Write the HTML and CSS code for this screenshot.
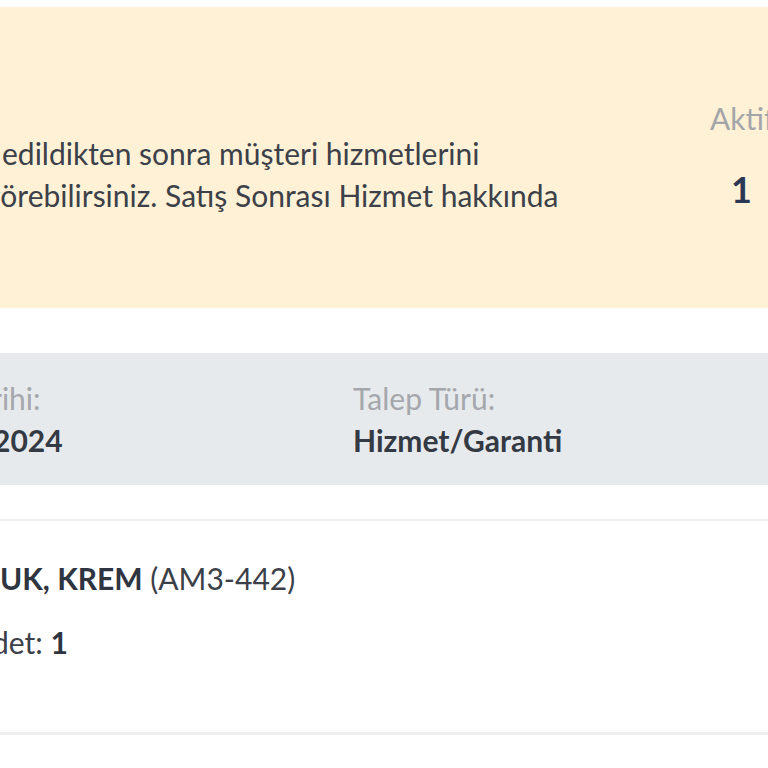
FILE: index.html
```html
<!DOCTYPE html>
<html lang="tr">
<head>
<meta charset="utf-8">
<link rel="stylesheet" href="styles.css">
</head>
<body>
<div class="page">
  <section class="banner">
    <div class="banner-text">
      <div class="line line-1">edildikten sonra müşteri hizmetlerini</div>
      <div class="line line-2">görebilirsiniz. Satış Sonrası Hizmet hakkında</div>
    </div>
    <div class="stat">
      <div class="stat-label">Aktif</div>
      <div class="stat-value">1</div>
    </div>
  </section>

  <section class="info">
    <div class="info-col">
      <div class="info-label info-label-first">rihi:</div>
      <div class="info-value info-value-first">2024</div>
    </div>
    <div class="info-col">
      <div class="info-label">Talep Türü:</div>
      <div class="info-value">Hizmet/Garanti</div>
    </div>
  </section>

  <section class="item">
    <div class="item-name"><strong>UK, KREM</strong> (AM3-442)</div>
    <div class="item-qty">det: <strong>1</strong></div>
  </section>
</div>
</body>
</html>
```
FILE: styles.css
```css
html, body {
  margin: 0;
  padding: 0;
  background: #ffffff;
  overflow: hidden;
}
body {
  font-family: Lato, "Open Sans", sans-serif;
  color: #343a44;
  width: 768px;
  height: 768px;
}
.page {
  padding-top: 7px;
  display: flex;
  flex-direction: column;
}
.banner {
  height: 301px;
  background: #fef1d6;
  display: flex;
  justify-content: space-between;
  box-sizing: border-box;
}
.banner-text {
  padding-top: 125px;
  font-size: 30px;
  line-height: 42px;
  color: #3c4049;
}
.line {
  white-space: nowrap;
}
.line-1 {
  margin-left: 2px;
}
.line-2 {
  margin-left: -15px;
}
.stat {
  width: 58px;
  padding-top: 96px;
  white-space: nowrap;
}
.stat-label {
  font-size: 30px;
  line-height: 30px;
  color: #a3a5a8;
}
.stat-value {
  margin-top: 36px;
  margin-left: 21px;
  font-size: 36px;
  line-height: 40px;
  font-weight: 700;
  color: #2b3853;
}
.info {
  margin-top: 45px;
  height: 132px;
  background: #e7eaed;
  display: grid;
  grid-template-columns: 353px 1fr;
  box-sizing: border-box;
  padding-top: 28px;
}
.info-label {
  font-size: 30px;
  line-height: 34px;
  color: #a4a7ab;
}
.info-label-first {
  margin-left: -9px;
}
.info-value {
  margin-top: 8px;
  font-size: 30px;
  line-height: 34px;
  font-weight: 700;
  color: #343a44;
}
.info-value-first {
  margin-left: -7px;
}
.item {
  margin-top: 34px;
  border-top: 2px solid #efefef;
  border-bottom: 3px solid #efefef;
  height: 216px;
  box-sizing: border-box;
  padding-top: 40px;
  font-size: 30px;
  line-height: 34px;
  color: #3c4049;
}
.item-name strong,
.item-qty strong {
  font-weight: 700;
  color: #2f3540;
}
.item-qty {
  margin-top: 30px;
  margin-left: -8px;
}
```
